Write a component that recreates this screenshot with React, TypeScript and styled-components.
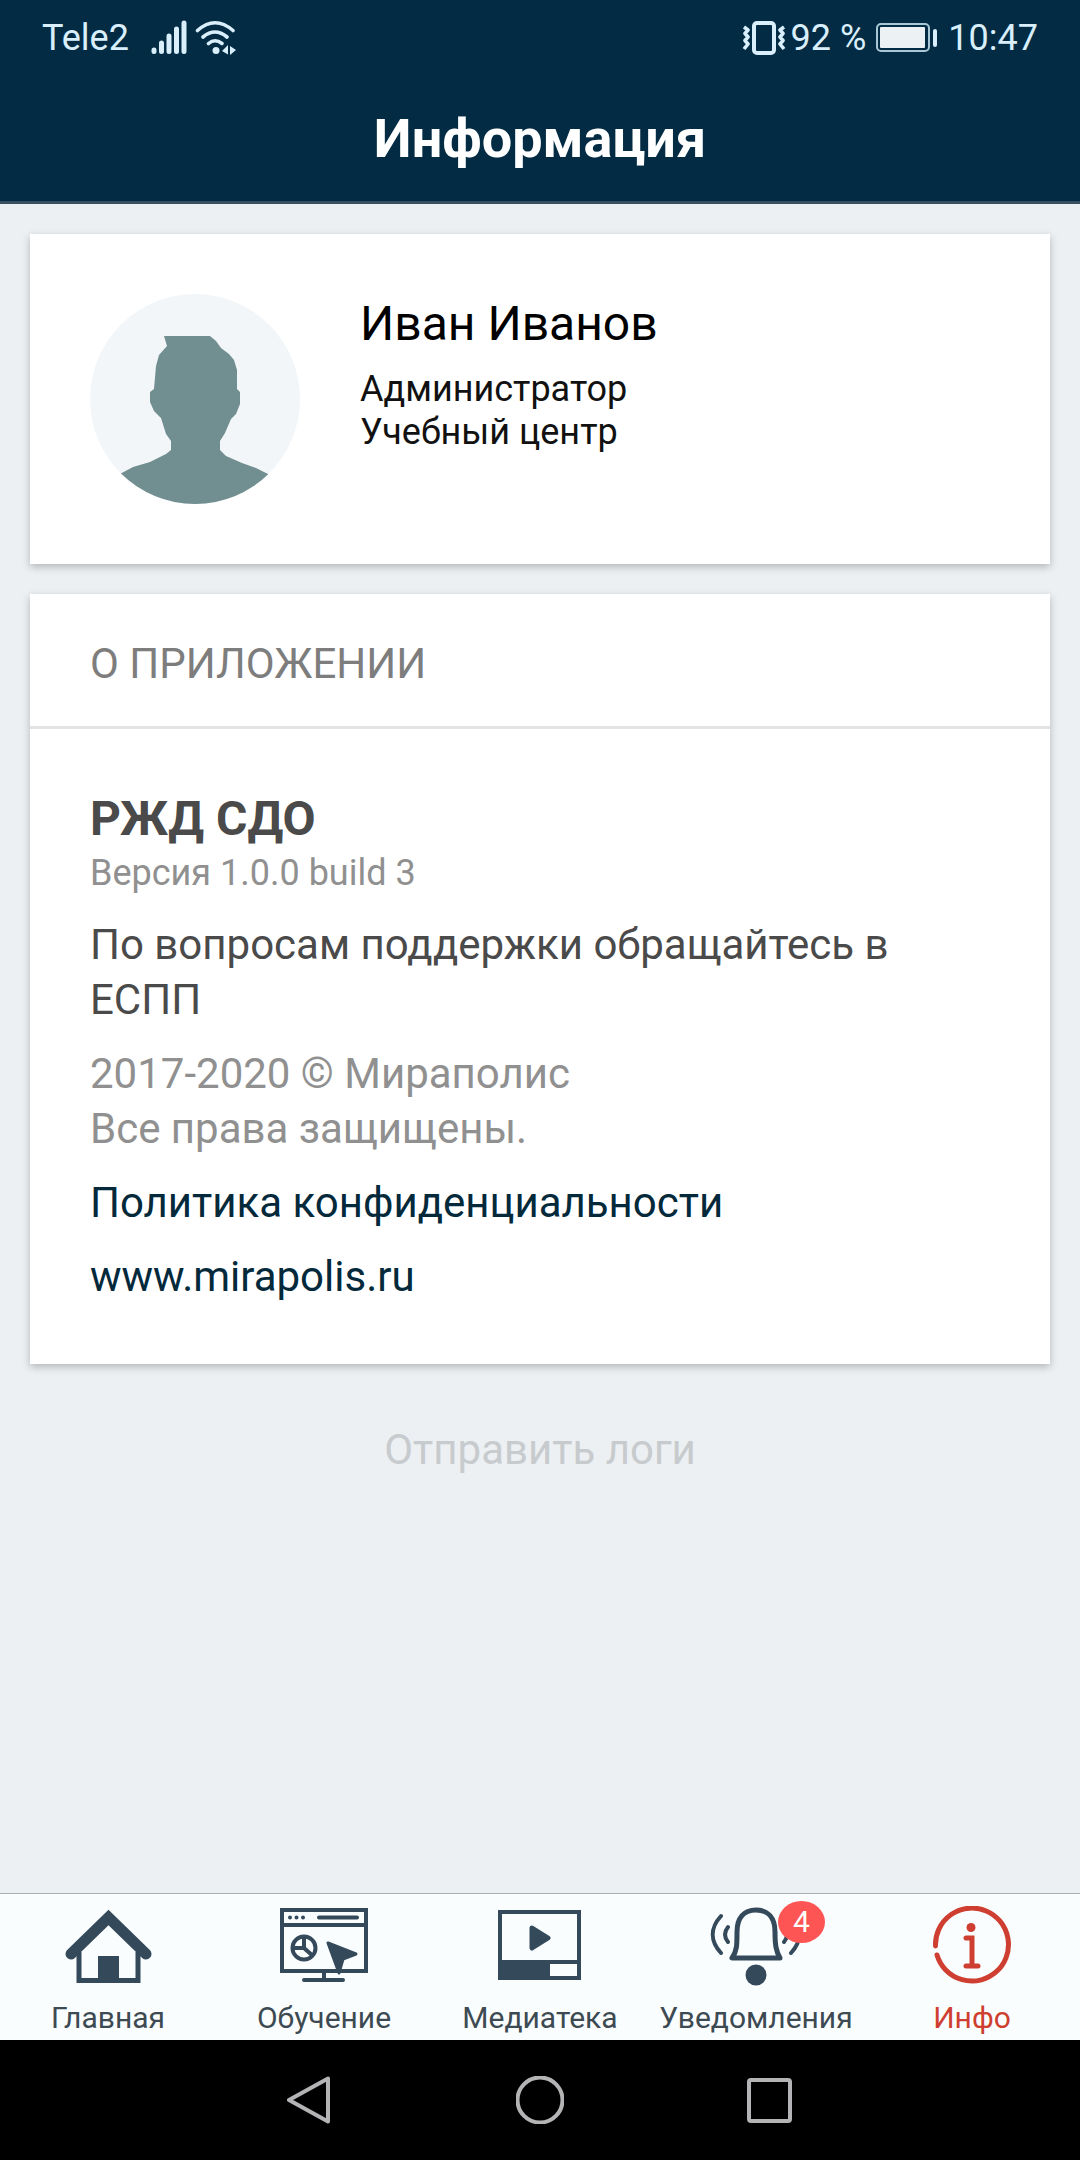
import React from 'react';
import styled, { createGlobalStyle } from 'styled-components';

const GlobalStyle = createGlobalStyle`
  *, *::before, *::after { box-sizing: border-box; }
  body { margin: 0; background: #ecf0f3; font-family: Roboto, "Noto Sans", sans-serif; }
  h1, h2, h3, p { margin: 0; }
  button { font: inherit; border: 0; padding: 0; background: none; cursor: pointer; }
`;

const ink = '#34495a';

const Screen = styled.div`
  min-height: 100vh;
  display: flex;
  flex-direction: column;
`;

const Header = styled.header`
  background: #032b43;
  border-bottom: 3px solid #384f62;
  color: #d9effc;
`;

const StatusBar = styled.div`
  height: 75px;
  padding: 0 42px;
  display: flex;
  align-items: center;
  justify-content: space-between;
  font-size: 36px;
  line-height: 42px;
`;

const StatusGroup = styled.div<{ $gap: number }>`
  display: flex;
  align-items: center;
  gap: ${(p) => p.$gap}px;
`;

const SignalIcons = styled.span`
  display: flex;
  gap: 8px;
  margin-left: 14px;
`;

const Title = styled.h1`
  padding: 32px 30px 31px;
  color: #fff;
  font-size: 54px;
  line-height: 63px;
  font-weight: 700;
  text-align: center;
`;

const Main = styled.main`
  flex: 1;
  display: flex;
  flex-direction: column;
  gap: 30px;
  padding: 30px;
`;

const Card = styled.section`
  background: #fff;
  box-shadow: 0 3px 8px rgba(0, 0, 0, 0.24);
`;

const Profile = styled(Card)`
  display: flex;
  gap: 60px;
  padding: 60px;
`;

const ProfileText = styled.div`
  display: flex;
  flex-direction: column;
  gap: 14px;
  color: #111;
`;

const Name = styled.h2`
  color: #000;
  font-size: 48px;
  line-height: 60px;
  font-weight: 400;
`;

const Role = styled.p`
  font-size: 36px;
  line-height: 43px;
`;

const CardHeading = styled.h2`
  padding: 47px 60px 39px;
  border-bottom: 3px solid #e2e3e5;
  color: #7d7d7d;
  font-size: 42px;
  line-height: 46px;
  font-weight: 400;
`;

const About = styled.div`
  display: flex;
  flex-direction: column;
  gap: 19px;
  padding: 60px;
  font-size: 42px;
  line-height: 55px;
`;

const AppName = styled.h3`
  color: #4a4a4a;
  font-size: 48px;
  line-height: 60px;
  font-weight: 700;
`;

const Version = styled.p`
  color: #909090;
  font-size: 36px;
  line-height: 49px;
`;

const Paragraph = styled.p<{ $color: string }>`
  color: ${(p) => p.$color};
`;

const TextLink = styled.a`
  color: #03293b;
  text-decoration: none;
`;

const SendLogs = styled.button`
  align-self: center;
  margin-top: 28px;
  color: #c8cbce;
  font-size: 42px;
  line-height: 55px;
`;

const TabBar = styled.nav`
  display: grid;
  grid-template-columns: repeat(5, 1fr);
  height: 147px;
  border-top: 1px solid #a9b1b4;
  background: #f9fdfe;
`;

const Tab = styled.button<{ $active?: boolean }>`
  display: flex;
  flex-direction: column;
  align-items: center;
  gap: 14px;
  padding-top: 12px;
  min-width: 0;
  color: ${(p) => (p.$active ? '#cf3f31' : '#3d4a52')};
  font-size: 30px;
  line-height: 35px;
`;

const IconBox = styled.span`
  position: relative;
  display: flex;
  svg { display: block; }
`;

const Badge = styled.span`
  position: absolute;
  left: 68px;
  top: -5px;
  width: 47px;
  height: 42px;
  border-radius: 50%;
  background: #fd5553;
  color: #fff;
  line-height: 42px;
  text-align: center;
`;

const SystemNav = styled.nav`
  display: flex;
  justify-content: center;
  gap: 182px;
  height: 120px;
  background: #000;
`;

const Key = styled.button`
  display: flex;
  align-items: center;
`;

const Signal = () => (
  <svg width="36" height="36" viewBox="0 0 36 36" stroke="#d9effc" strokeWidth="5" strokeLinecap="round" aria-hidden="true">
    <path d="M3 30v1.500M10.500 23v8.500M18 16v15.500M25.500 9v22.500M33 3v28.500" />
  </svg>
);

const Wifi = () => (
  <svg width="42" height="36" viewBox="0 0 42 36" fill="none" stroke="#d9effc" strokeWidth="3.600" strokeLinecap="round" aria-hidden="true">
    <path d="M2.500 10.500Q20 -5 38 10.500M8 17Q20 7 32 17M13.500 23.500Q20 18 27 23.500" />
    <circle cx="21" cy="30.500" r="3.500" fill="#d9effc" stroke="none" />
    <path d="M27 31l6-6v9.500zM35 26l6 4-6 5z" fill="#d9effc" stroke="none" />
  </svg>
);

const Vibrate = () => (
  <svg width="44" height="36" viewBox="0 0 44 36" fill="none" stroke="#d9effc" aria-hidden="true">
    <rect x="12" y="3" width="20" height="30" rx="3" strokeWidth="4" />
    <path d="M2 7l4 3-3 3.500 3 3.500-3 3.500 3 3.500-4 5M42 7l-4 3 3 3.500-3 3.500 3 3.500-3 3.500 4 5" strokeWidth="3.600" strokeLinejoin="round" />
  </svg>
);

const Battery = () => (
  <svg width="62" height="30" viewBox="0 0 62 30" fill="none" aria-hidden="true">
    <rect x="1" y="1" width="52" height="27" rx="4" stroke="#a9c8d6" strokeWidth="2" />
    <rect x="4" y="4" width="45" height="21" rx="1" fill="#ecf1f4" />
    <rect x="57" y="6" width="4" height="18" rx="2" fill="#d9effc" />
  </svg>
);

const Avatar = () => (
  <svg width="210" height="210" viewBox="0 0 210 210" role="img" aria-label="Иван Иванов">
    <clipPath id="avatar-clip"><circle cx="105" cy="105" r="105" /></clipPath>
    <g clipPath="url(#avatar-clip)">
      <rect width="210" height="210" fill="#f3f6f8" />
      <path
        d="M74 42H120L126 47L131 54L139 60L144 66L147 76V95L150 98V110L146 120L141 125L135 139L130 147V156L136 162L152 169L166 174L180 181V210H28V181L43 173L60 168L76 160L81 156V147L76 140L71 124L64 117L60 108V98L64 95L66 72L69 61L77 52Z"
        fill="#718e91"
      />
    </g>
  </svg>
);

const Home = () => (
  <svg width="88" height="80" viewBox="0 0 88 80" fill="none" stroke={ink} aria-hidden="true">
    <path d="M15 46V74.500H74V46" strokeWidth="5" />
    <path d="M7 48L44.500 11.500L82 48" strokeWidth="11" strokeLinecap="round" />
    <path d="M34 50H55V76H34Z" fill={ink} stroke="none" />
  </svg>
);

const Learning = () => (
  <svg width="90" height="80" viewBox="0 0 90 80" fill="none" stroke={ink} strokeWidth="4" aria-hidden="true">
    <path d="M3 4H87V65H3ZM3 19H87M45 65V74" />
    <path d="M25 74H64M40 11.500H78" strokeLinecap="round" />
    <path d="M11 11.500v0.100M17.500 11.500v0.100M24 11.500v0.100" strokeLinecap="round" />
    <circle cx="25" cy="42" r="11.500" />
    <path d="M25 31V42L34 50M25 42H14" />
    <path d="M49 37L77 48L64 53L60 67Z" fill={ink} strokeWidth="3" strokeLinejoin="round" />
  </svg>
);

const Media = () => (
  <svg width="84" height="80" viewBox="0 0 84 80" fill="none" stroke={ink} strokeWidth="4" aria-hidden="true">
    <path d="M2 6H81V72H2ZM2 56H81" />
    <path d="M2 56H50V72H2Z" fill={ink} />
    <path d="M34 22L50 32L34 42Z" fill={ink} strokeWidth="5" strokeLinejoin="round" />
  </svg>
);

const Bell = () => (
  <svg width="92" height="80" viewBox="0 0 92 80" fill="none" stroke={ink} strokeWidth="5" strokeLinecap="round" strokeLinejoin="round" aria-hidden="true">
    <path d="M22 52H70C66 45 65 39 65 26C65 12 58 4 46 4S27 12 27 26C27 39 27 45 22 52Z" />
    <path d="M11 10C0 22 0 35 11 47M18 21C14 26 14 31 18 36M81 10C92 22 92 35 81 47M74 21C78 26 78 31 74 36" strokeWidth="4" />
    <circle cx="46" cy="69" r="10.500" fill={ink} stroke="none" />
  </svg>
);

const Info = () => (
  <svg width="80" height="80" viewBox="0 0 80 80" fill="none" stroke="#cf3f31" strokeWidth="5" strokeLinecap="round" aria-hidden="true">
    <path d="M3.500 40A36.500 36.500 0 1 1 5 49" />
    <path d="M34 32H40V60M34 60H46" />
    <circle cx="39" cy="21.500" r="4.500" fill="#cf3f31" stroke="none" />
  </svg>
);

const tabs = [
  { label: 'Главная', icon: <Home /> },
  { label: 'Обучение', icon: <Learning /> },
  { label: 'Медиатека', icon: <Media /> },
  { label: 'Уведомления', icon: <Bell />, badge: 4 },
  { label: 'Инфо', icon: <Info />, active: true },
];

const keys = [
  { label: 'Назад', shape: <path d="M3 24L42 2.500V45.500Z" /> },
  { label: 'Домой', shape: <circle cx="24" cy="24" r="22.500" /> },
  { label: 'Недавние', shape: <rect x="3" y="4" width="41" height="41" rx="2" /> },
];

export default function App() {
  return (
    <Screen>
      <GlobalStyle />
      <Header>
        <StatusBar>
          <StatusGroup $gap={8}>
            <span>Tele2</span>
            <SignalIcons><Signal /><Wifi /></SignalIcons>
          </StatusGroup>
          <StatusGroup $gap={10}>
            <StatusGroup $gap={5}><Vibrate /><span>92 %</span></StatusGroup>
            <Battery />
            <span>10:47</span>
          </StatusGroup>
        </StatusBar>
        <Title>Информация</Title>
      </Header>
      <Main>
        <Profile>
          <Avatar />
          <ProfileText>
            <Name>Иван Иванов</Name>
            <div>
              <Role>Администратор</Role>
              <Role>Учебный центр</Role>
            </div>
          </ProfileText>
        </Profile>
        <Card>
          <CardHeading>О ПРИЛОЖЕНИИ</CardHeading>
          <About>
            <div>
              <AppName>РЖД СДО</AppName>
              <Version>Версия 1.0.0 build 3</Version>
            </div>
            <Paragraph $color="#4a4a4a">По вопросам поддержки обращайтесь в ЕСПП</Paragraph>
            <Paragraph $color="#909090">
              2017-2020 © Мираполис
              <br />
              Все права защищены.
            </Paragraph>
            <TextLink href="#privacy">Политика конфиденциальности</TextLink>
            <TextLink href="#site">www.mirapolis.ru</TextLink>
          </About>
        </Card>
        <SendLogs type="button">Отправить логи</SendLogs>
      </Main>
      <TabBar>
        {tabs.map((tab) => (
          <Tab key={tab.label} type="button" $active={tab.active}>
            <IconBox>
              {tab.icon}
              {tab.badge && <Badge>{tab.badge}</Badge>}
            </IconBox>
            <span>{tab.label}</span>
          </Tab>
        ))}
      </TabBar>
      <SystemNav>
        {keys.map((key) => (
          <Key key={key.label} type="button" aria-label={key.label}>
            <svg width="48" height="48" viewBox="0 0 48 48" fill="none" stroke="#b4b4b6" strokeWidth="4" strokeLinejoin="round">
              {key.shape}
            </svg>
          </Key>
        ))}
      </SystemNav>
    </Screen>
  );
}
